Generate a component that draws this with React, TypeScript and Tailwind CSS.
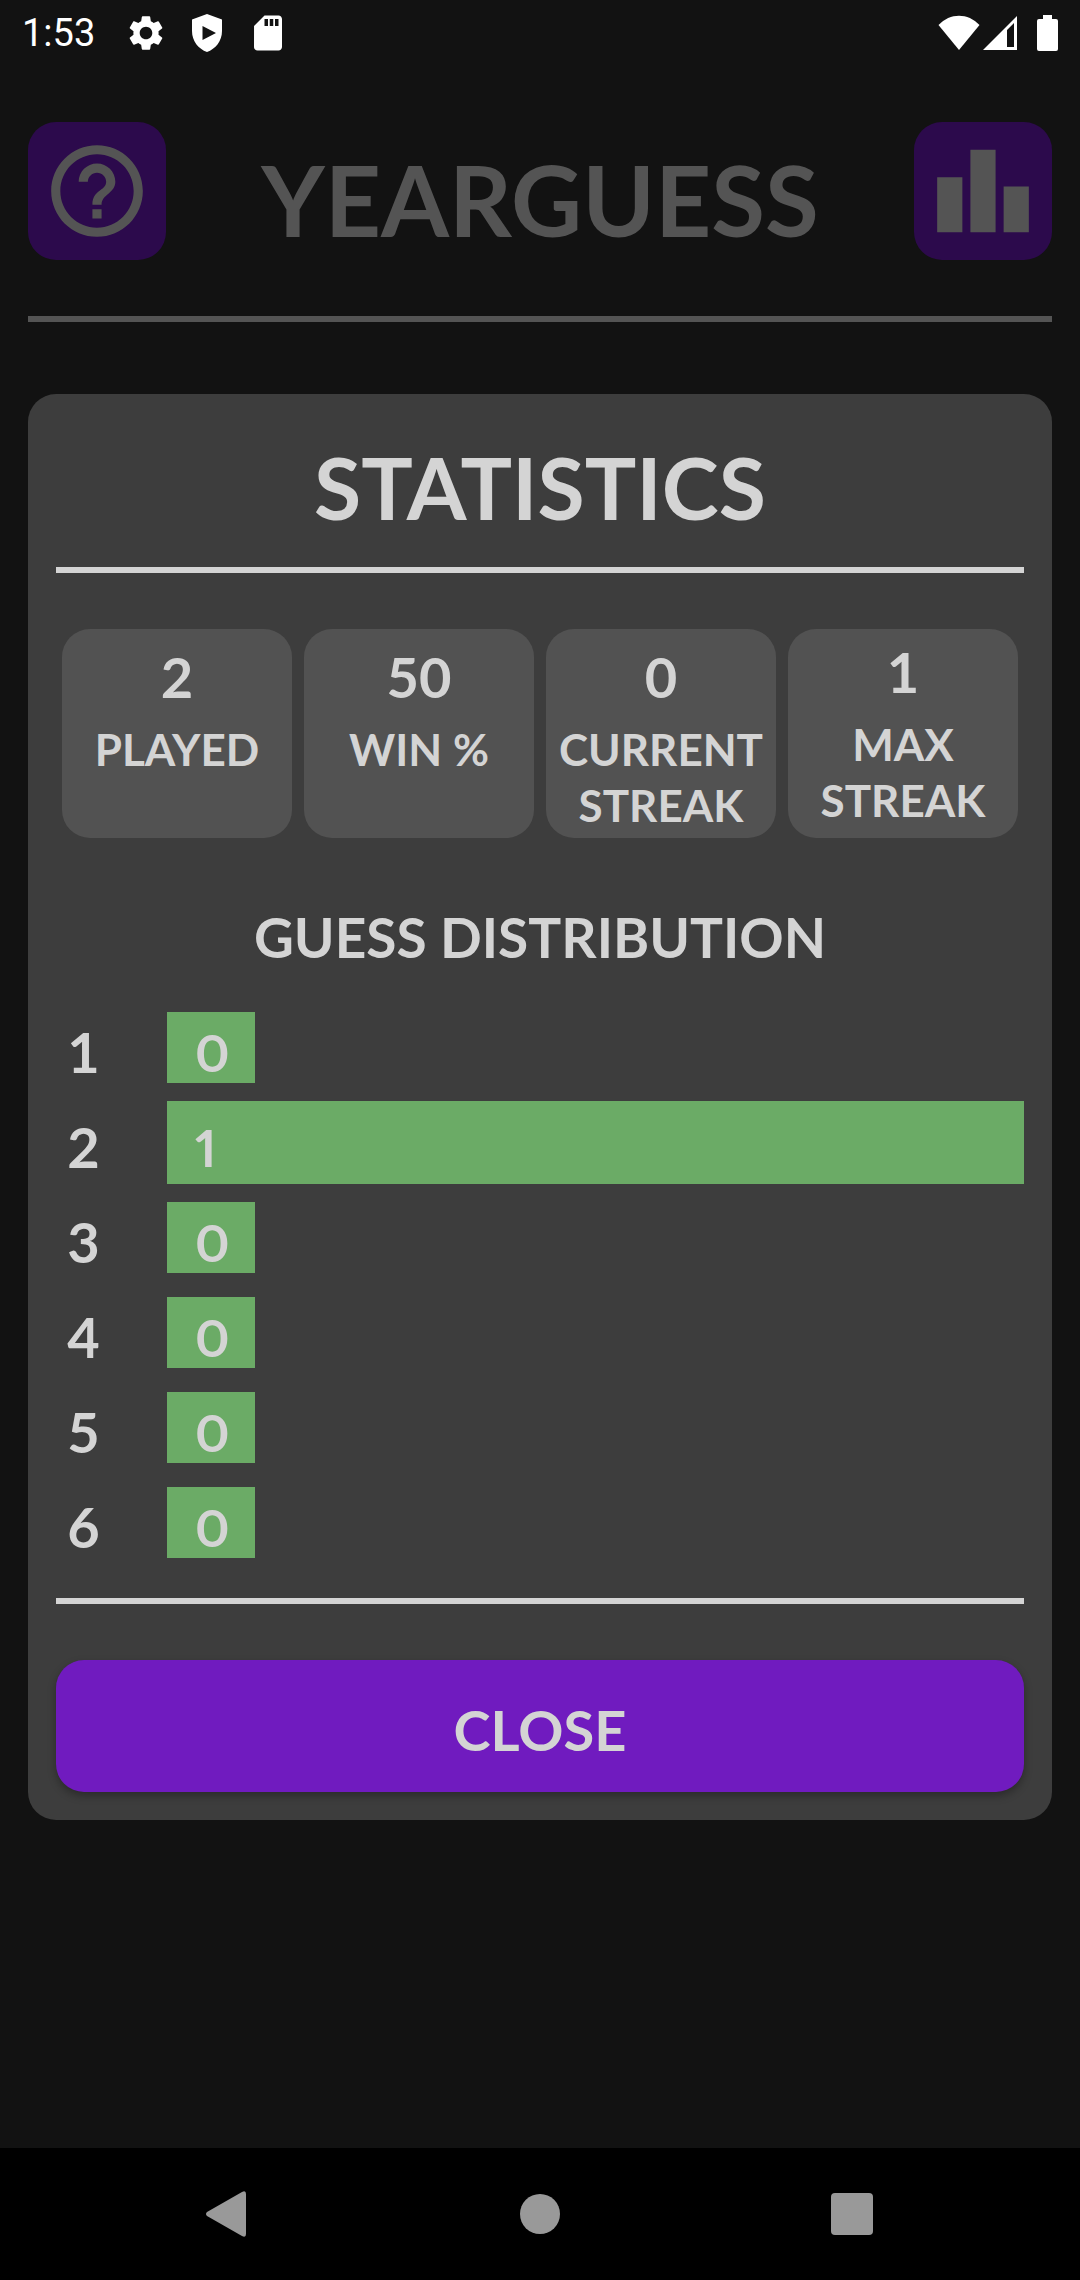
import React, { useState } from 'react';
import { MdHelpOutline, MdLeaderboard, MdSdCard, MdSettings } from 'react-icons/md';

interface Stat {
  label: string;
  value: number;
}

const stats: Stat[] = [
  { label: 'PLAYED', value: 2 },
  { label: 'WIN %', value: 50 },
  { label: 'CURRENT STREAK', value: 0 },
  { label: 'MAX STREAK', value: 1 },
];

const distribution = [0, 1, 0, 0, 0, 0];

function StatusBar() {
  return (
    <div className="flex h-[66px] items-center justify-between px-[22px] text-white">
      <div className="flex items-center">
        <span className="mr-[30px] font-[Roboto,sans-serif] text-[38px] leading-none">1:53</span>
        <MdSettings className="mr-6 size-[42px]" />
        <svg viewBox="0 0 32 38" className="mr-6 h-[38px] w-8" fill="currentColor">
          <path
            fillRule="evenodd"
            d="M16 0 L31 5.5 V17 C31 27 24.500 35 16 38 C7.500 35 1 27 1 17 V5.500 Z M11.500 12 V26 L25 19 Z"
          />
        </svg>
        <MdSdCard className="size-[42px]" />
      </div>
      <div className="flex items-center">
        <svg viewBox="0 0 42 36" className="mr-0.5 h-9 w-[42px]" fill="currentColor">
          <path d="M0.500 10 C12 -2.500 30 -2.500 41.500 10 L21 35 Z" />
        </svg>
        <svg viewBox="0 0 36 36" className="mr-[18px] size-9" fill="currentColor">
          <path fillRule="evenodd" d="M1 35 L35 1 V35 Z M25 15 V32 H32 V8 Z" />
        </svg>
        <svg viewBox="0 0 22 36" className="h-9 w-[22px]" fill="currentColor">
          <path d="M7 0 H16 V4 H20 Q22 4 22 6 V34 Q22 36 20 36 H3 Q1 36 1 34 V6 Q1 4 3 4 H7 Z" />
        </svg>
      </div>
    </div>
  );
}

function Header({ onOpenStats }: { onOpenStats: () => void }) {
  return (
    <header className="mx-7 mt-14 border-b-6 border-[#545454] pb-14 text-[#545454]">
      <div className="flex items-center justify-between">
        <button aria-label="Help" className="flex size-[138px] items-center justify-center rounded-[28px] bg-[#2c0a4c]">
          <MdHelpOutline className="size-[110px]" />
        </button>
        <h1 className="pt-4 text-[98px] font-bold leading-none proportional-nums">YEARGUESS</h1>
        <button
          aria-label="Statistics"
          onClick={onOpenStats}
          className="flex size-[138px] items-center justify-center rounded-[28px] bg-[#2c0a4c]"
        >
          <MdLeaderboard className="size-[110px]" />
        </button>
      </div>
    </header>
  );
}

function StatCard({ label, value }: Stat) {
  return (
    <div className="flex h-[209px] flex-1 flex-col items-center gap-3 rounded-[28px] bg-[#525252] pt-4 text-center last:justify-center last:pt-0">
      <div className="text-[56px] font-bold leading-[64px]">{value}</div>
      <div className="text-[44px] font-bold leading-[56px]">{label}</div>
    </div>
  );
}

function GuessDistribution() {
  const max = Math.max(...distribution);

  return (
    <ol>
      {distribution.map((count, index) => (
        <li key={index} className="flex h-[95px] items-center">
          <span className="w-[55px] shrink-0 pt-2 text-center text-[56px] font-bold leading-none">{index + 1}</span>
          <div className="ml-14 flex-1">
            <div
              className={`flex items-center bg-[#6bab66] px-7 pt-2 text-[52px] font-bold leading-none proportional-nums ${
                count === max ? 'h-[83px] w-full' : 'h-[71px] w-[88px]'
              }`}
            >
              {count}
            </div>
          </div>
        </li>
      ))}
    </ol>
  );
}

function StatisticsDialog({ onClose }: { onClose: () => void }) {
  return (
    <section
      role="dialog"
      aria-labelledby="stats-title"
      className="mx-7 mt-[72px] rounded-[28px] bg-[#3d3d3d] p-7 text-[#d4d4d4]"
    >
      <h2 id="stats-title" className="border-b-6 border-[#d4d4d4] pt-[18px] pb-[34px] text-center text-[86px] font-bold leading-[93px]">
        STATISTICS
      </h2>

      <div className="mt-14 flex gap-3 px-1.5">
        {stats.map((stat) => (
          <StatCard key={stat.label} {...stat} />
        ))}
      </div>

      <h3 className="mt-[66px] mb-[30px] text-center text-[55px] font-bold leading-[66px]">GUESS DISTRIBUTION</h3>
      <GuessDistribution />

      <div className="mt-7 border-t-6 border-[#d4d4d4] pt-14">
        <button
          onClick={onClose}
          className="h-[132px] w-full rounded-[28px] bg-[#701bbf] pt-2 text-[56px] font-bold leading-none shadow-[0_4px_8px_rgba(0,0,0,0.3)]"
        >
          CLOSE
        </button>
      </div>
    </section>
  );
}

function NavigationBar() {
  return (
    <nav className="mt-auto grid h-[132px] grid-cols-3 place-items-center bg-black px-[72px] text-[#999999]">
      <button aria-label="Back">
        <svg viewBox="0 0 46 46" className="size-[46px]" fill="currentColor">
          <path d="M2 21 L37 1 Q41 -1 41 3 V43 Q41 47 37 45 L2 25 Q0 23 2 21 Z" />
        </svg>
      </button>
      <button aria-label="Home" className="size-10 rounded-full bg-[#999999]" />
      <button aria-label="Recent apps" className="size-[42px] rounded-[4px] bg-[#999999]" />
    </nav>
  );
}

export default function App() {
  const [showStats, setShowStats] = useState(true);

  return (
    <div className="flex min-h-screen flex-col bg-[#121212] font-[Lato,sans-serif]">
      <StatusBar />
      <Header onOpenStats={() => setShowStats(true)} />
      {showStats && <StatisticsDialog onClose={() => setShowStats(false)} />}
      <NavigationBar />
    </div>
  );
}
